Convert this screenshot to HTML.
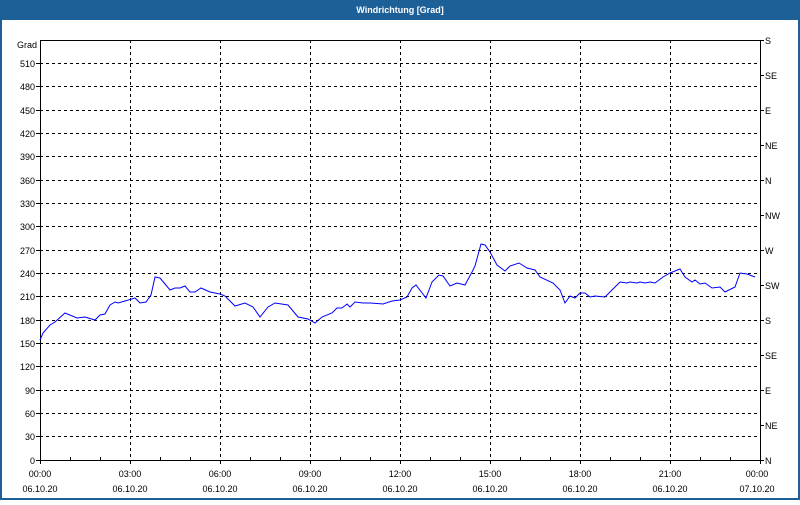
<!DOCTYPE html>
<html><head><style>
body{margin:0;width:800px;height:500px;overflow:hidden;background:#fff}
svg text{font-family:"Liberation Sans",sans-serif;font-size:9px;fill:#000}
</style></head><body>
<svg width="800" height="500" xmlns="http://www.w3.org/2000/svg">
<rect x="0" y="0" width="800" height="500" fill="#1d5f97"/>
<rect x="2" y="20" width="796" height="478" fill="#fff"/>
<text x="400" y="13" text-anchor="middle" style="font-weight:bold;fill:#fff;font-size:9px">Windrichtung [Grad]</text>
<g stroke="#000" stroke-dasharray="3,3" stroke-width="1">
<path d="M40 63.5H760M40 86.5H760M40 110.5H760M40 133.5H760M40 156.5H760M40 180.5H760M40 203.5H760M40 226.5H760M40 250.5H760M40 273.5H760M40 296.5H760M40 320.5H760M40 343.5H760M40 366.5H760M40 390.5H760M40 413.5H760M40 436.5H760"/>
<path d="M130.5 40V460M220.5 40V460M310.5 40V460M400.5 40V460M490.5 40V460M580.5 40V460M670.5 40V460"/>
</g>
<path d="M40.5 40V460.5H760.5V40M40 40.5H760" stroke="#000" fill="none"/>
<g stroke="#000">
<path d="M70.5 457V460M100.5 457V460M160.5 457V460M190.5 457V460M250.5 457V460M280.5 457V460M340.5 457V460M370.5 457V460M430.5 457V460M460.5 457V460M520.5 457V460M550.5 457V460M610.5 457V460M640.5 457V460M700.5 457V460M730.5 457V460"/>
<path d="M130.5 460V464M220.5 460V464M310.5 460V464M400.5 460V464M490.5 460V464M580.5 460V464M670.5 460V464M40.5 460V464M760.5 460V464"/>
<path d="M760 40.5h4M760 75.5h4M760 110.5h4M760 145.5h4M760 180.5h4M760 215.5h4M760 250.5h4M760 285.5h4M760 320.5h4M760 355.5h4M760 390.5h4M760 425.5h4M760 460.5h4"/>
<path d="M36 63.5h4M36 86.5h4M36 110.5h4M36 133.5h4M36 156.5h4M36 180.5h4M36 203.5h4M36 226.5h4M36 250.5h4M36 273.5h4M36 296.5h4M36 320.5h4M36 343.5h4M36 366.5h4M36 390.5h4M36 413.5h4M36 436.5h4M36 460.5h4"/>
</g>
<g text-anchor="end">
<text x="37" y="48">Grad</text>
<text x="35" y="67">510</text><text x="35" y="90">480</text><text x="35" y="114">450</text><text x="35" y="137">420</text><text x="35" y="160">390</text><text x="35" y="184">360</text><text x="35" y="207">330</text><text x="35" y="230">300</text><text x="35" y="254">270</text><text x="35" y="277">240</text><text x="35" y="300">210</text><text x="35" y="324">180</text><text x="35" y="347">150</text><text x="35" y="370">120</text><text x="35" y="394">90</text><text x="35" y="417">60</text><text x="35" y="440">30</text><text x="35" y="464">0</text>
</g>
<g>
<text x="765" y="44">S</text><text x="765" y="79">SE</text><text x="765" y="114">E</text><text x="765" y="149">NE</text><text x="765" y="184">N</text><text x="765" y="219">NW</text><text x="765" y="254">W</text><text x="765" y="289">SW</text><text x="765" y="324">S</text><text x="765" y="359">SE</text><text x="765" y="394">E</text><text x="765" y="429">NE</text><text x="765" y="464">N</text>
</g>
<g text-anchor="middle">
<text x="40" y="477">00:00</text><text x="40" y="492">06.10.20</text>
<text x="130" y="477">03:00</text><text x="130" y="492">06.10.20</text>
<text x="220" y="477">06:00</text><text x="220" y="492">06.10.20</text>
<text x="310" y="477">09:00</text><text x="310" y="492">06.10.20</text>
<text x="400" y="477">12:00</text><text x="400" y="492">06.10.20</text>
<text x="490" y="477">15:00</text><text x="490" y="492">06.10.20</text>
<text x="580" y="477">18:00</text><text x="580" y="492">06.10.20</text>
<text x="670" y="477">21:00</text><text x="670" y="492">06.10.20</text>
<text x="757" y="477">00:00</text><text x="757" y="492">07.10.20</text>
</g>
<polyline fill="none" stroke="#0000ff" stroke-width="1" points="40,340 43,333 50,325 55,322 65,313 77,318 85,317 95,320 100,315 105,314 110,305 115,302 118,303 125,301 135,298 140,303 146,302 151,295 155,277 160,278 170,290 175,288 180,288 185,286 190,292 195,292 201,288 210,292 220,294 225,296 235,306 245,303 253,307 260,317 268,307 275,303 288,305 298,317 308,319 315,323 322,317 332,313 337,308 342,308 347,304 350,307 355,302 363,303 370,303 383,304 392,301 400,300 407,297 412,288 416,285 426,298 432,282 439,275 443,276 450,286 457,283 465,285 472,272 475,266 481,244 485,245 490,252 497,265 505,271 510,266 519,263 527,268 535,270 540,277 553,283 560,290 565,303 570,296 575,298 580,293 585,293 590,297 595,296 605,297 612,290 620,282 627,283 630,282 637,283 640,282 645,283 650,282 655,283 663,277 670,273 680,269 685,277 692,282 695,280 700,284 705,283 712,288 720,287 725,292 733,288 735,287 740,273 747,274 755,277"/>
</svg>
</body></html>
